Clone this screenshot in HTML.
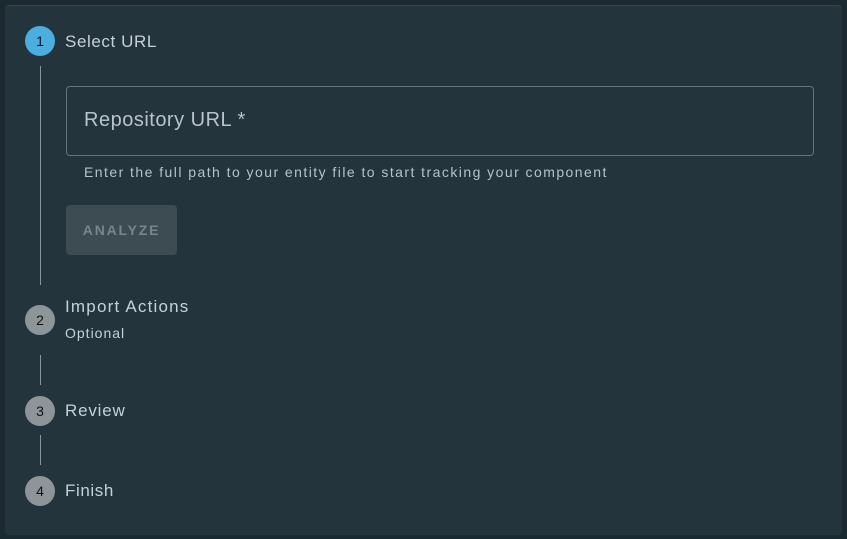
<!DOCTYPE html>
<html><head><style>
body{margin:0;width:847px;height:539px;background:#1d2930;font-family:"Liberation Sans",sans-serif;overflow:hidden;position:relative}
.card{position:absolute;left:5px;top:5px;width:837px;height:529px;background:#24343c;border-radius:4px;border-top:1px solid #33434b}
.c{position:absolute;left:25px;width:30px;height:30px;border-radius:50%;background:#8e9599;color:#111;font-size:14px;text-align:center;line-height:30px}
.t{position:absolute;left:65px;color:#c5d1da;font-size:17px;letter-spacing:.6px}
.l{position:absolute;left:40px;width:1px;background:#8a969c}
.box{position:absolute;left:66px;top:86px;width:746px;height:68px;border:1px solid #66747b;border-radius:4px}
.ph{position:absolute;left:84px;top:109px;font-size:20px;color:#b8c4cc;letter-spacing:.5px}
.help{position:absolute;left:84px;top:164px;font-size:14px;color:#b5c2ca;letter-spacing:1.45px}
.btn{position:absolute;left:66px;top:205px;width:111px;height:50px;background:#3d4b52;border-radius:4px;color:#78858b;font-size:14px;font-weight:bold;letter-spacing:1.8px;text-align:center;line-height:50px}
</style></head><body>
<div class="card"></div>
<div class="c" style="top:26px;background:#4aaee0">1</div>
<div class="t" style="top:32px">Select URL</div>
<div class="l" style="top:66px;height:219px"></div>
<div class="box"></div>
<div class="ph">Repository URL *</div>
<div class="help">Enter the full path to your entity file to start tracking your component</div>
<div class="btn">ANALYZE</div>
<div class="c" style="top:305px">2</div>
<div class="t" style="top:297px;letter-spacing:1.2px">Import Actions</div>
<div class="t" style="top:325px;font-size:14px;letter-spacing:1px">Optional</div>
<div class="l" style="top:355px;height:30px"></div>
<div class="c" style="top:396px">3</div>
<div class="t" style="top:401px;letter-spacing:.8px">Review</div>
<div class="l" style="top:435px;height:30px"></div>
<div class="c" style="top:476px">4</div>
<div class="t" style="top:481px;letter-spacing:.6px">Finish</div>
</body></html>
